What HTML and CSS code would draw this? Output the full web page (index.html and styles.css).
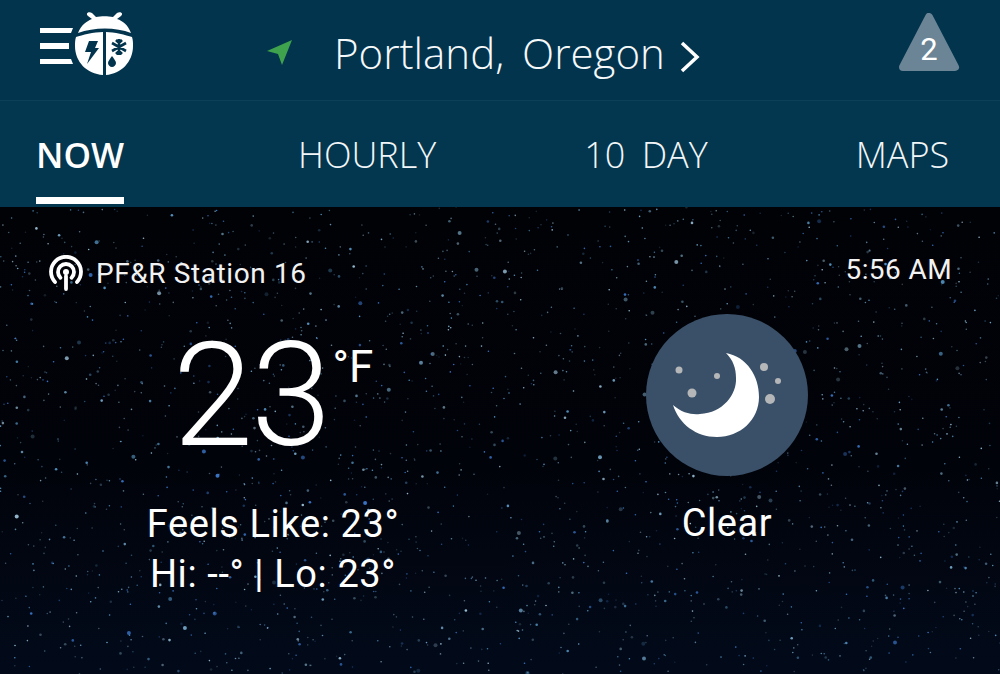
FILE: index.html
```html
<!DOCTYPE html>
<html lang="en">
<head>
    <meta charset="UTF-8">
    <meta name="viewport" content="width=device-width, initial-scale=1.0">
    <title>Portland, Oregon Weather</title>
    <link rel="stylesheet" href="styles.css">
</head>
<body>
    <!-- Location bar -->
    <header class="top-bar">
        <svg class="logo" viewBox="0 0 100 70" aria-hidden="true">
            <path class="logo-bar" d="M2 18H35L33 23H2ZM2 33H31V39H2ZM2 49H33L35 54H2Z"/>
            <path class="logo-fill" d="M40 23C43 15 49 11 54 9L50 6C47 3 51 1 54 3L58 7C63 6 70 6 75 7L79 3C82 1 86 3 83 6L79 9C85 11 90 15 93 23C78 17 56 17 40 23Z"/>
            <path class="logo-fill" d="M38 27C44 25 56 22 65 22V65C49 64 37 52 37 36C37 33 37 30 38 27ZM68 22C76 22 88 25 94 27C95 30 95 33 95 36C95 52 83 64 68 65Z"/>
            <path class="logo-bolt" d="M51 31H60L57 38H61L49 54L53 42H47Z"/>
            <path class="logo-snow" d="M81 29V45M74 33L88 41M74 41L88 33M78 30L81 33L84 30M78 44L81 41L84 44"/>
            <path class="logo-bolt" d="M74 46C76 49 78 51 78 53C78 55 76 57 74 57C72 57 70 55 70 53C70 51 72 49 74 46Z"/>
        </svg>
        <div class="location">
            <svg class="arrow" viewBox="0 0 28 28" aria-hidden="true">
                <path d="M26 1L1 12L12 15L16 26Z"/>
            </svg>
            <span class="city">Portland, Oregon</span>
            <svg class="chevron" viewBox="0 0 20 32" aria-hidden="true">
                <path d="M2 2L17 16L2 30"/>
            </svg>
        </div>
        <div class="alert">
            <svg class="alert-shape" viewBox="0 0 62 60" aria-hidden="true">
                <path d="M31 4L57 54H5Z"/>
            </svg>
            <span class="alert-count">2</span>
        </div>
    </header>

    <!-- Tabs -->
    <nav class="tabs">
        <a class="tab active">NOW</a>
        <a class="tab">HOURLY</a>
        <a class="tab">10 DAY</a>
        <a class="tab">MAPS</a>
    </nav>

    <!-- Current conditions -->
    <main class="current">
        <svg id="stars" class="stars" aria-hidden="true"></svg>
        <div class="station-row">
            <div class="station">
                <svg class="station-icon" viewBox="0 0 36 36" aria-hidden="true">
                    <path d="M7 27A15 15 0 1 1 29 27"/>
                    <path d="M12.5 22.8A8 8 0 1 1 23.5 22.8"/>
                    <circle cx="18" cy="17" r="3"/>
                    <path d="M18 21V34"/>
                </svg>
                <span>PF&amp;R Station 16</span>
            </div>
            <span class="time">5:56 AM</span>
        </div>
        <div class="columns">
            <section class="temps">
                <div class="temp"><span class="temp-value">23</span><span class="temp-unit">°F</span></div>
                <p class="line">Feels Like: 23°</p>
                <p class="line">Hi: --° | Lo: 23°</p>
            </section>
            <section class="condition">
                <svg class="moon" viewBox="0 0 162 162" aria-hidden="true">
                    <circle class="moon-bg" cx="81" cy="81" r="81"/>
                    <path class="moon-shape" d="M80 39C101 43 113 62 113 83C113 106 94 123 71 123C50 123 33 110 27 91C36 99 46 101 54 100C77 99 91 80 90 64C90 54 87 46 80 39Z"/>
                    <circle class="moon-dot" cx="33" cy="56" r="3.5"/>
                    <circle class="moon-dot" cx="71" cy="62" r="3"/>
                    <circle class="moon-dot" cx="46" cy="79" r="4.5"/>
                    <circle class="moon-dot" cx="118" cy="53" r="4"/>
                    <circle class="moon-dot" cx="132" cy="67" r="3"/>
                    <circle class="moon-dot" cx="124" cy="85" r="5"/>
                </svg>
                <p class="line">Clear</p>
            </section>
        </div>
    </main>

    <script src="stars.js"></script>
</body>
</html>
```

FILE: styles.css
```css
* { box-sizing: border-box; }

html, body {
    margin: 0;
    height: 100%;
    overflow: hidden;
}
body {
    width: 1000px;
    height: 674px;
    background: #000;
    color: #fff;
    font-family: Roboto, sans-serif;
    display: flex;
    flex-direction: column;
}

.top-bar {
    height: 101px;
    background: #03344e;
    border-bottom: 1px solid #0c3f59;
    display: flex;
    align-items: flex-start;
    flex-shrink: 0;
}
.logo {
    width: 100px;
    height: 70px;
    margin: 10px 0 0 38px;
}
.logo-bar, .logo-fill { fill: #fff; }
.logo-bolt { fill: #03344e; }
.logo-snow {
    fill: none;
    stroke: #03344e;
    stroke-width: 2.6;
}

.location {
    display: flex;
    align-items: center;
    height: 100px;
    margin-left: 128px;
    padding-top: 4px;
}
.arrow {
    width: 28px;
    height: 28px;
    margin-top: 2px;
}
.arrow path { fill: #3fa34d; }
.city {
    font-family: "Open Sans", sans-serif;
    font-weight: 350;
    font-size: 42px;
    word-spacing: 7px;
    color: #f6f9fa;
    margin-left: 40px;
}
.chevron {
    width: 20px;
    height: 32px;
    margin: 9px 0 0 15px;
}
.chevron path {
    fill: none;
    stroke: #fff;
    stroke-width: 3.5;
}

.alert {
    position: relative;
    width: 62px;
    height: 60px;
    margin: 13px 40px 0 auto;
}
.alert-shape {
    width: 62px;
    height: 60px;
}
.alert-shape path {
    fill: #6b8596;
    stroke: #6b8596;
    stroke-width: 8;
    stroke-linejoin: round;
}
.alert-count {
    position: absolute;
    left: 0;
    right: 0;
    top: 20px;
    text-align: center;
    font-size: 31px;
    line-height: 34px;
}

.tabs {
    height: 106px;
    background: #03364f;
    display: flex;
    padding-left: 36px;
    font-family: "Open Sans", sans-serif;
    font-weight: 350;
    font-size: 36px;
    flex-shrink: 0;
}
.tab {
    color: #f2f6f8;
    line-height: 108px;
    height: 103px;
    margin-right: 148px;
    word-spacing: 7px;
    white-space: nowrap;
}
.tab.active {
    color: #fff;
    font-weight: 600;
    font-size: 35px;
    width: 90px;
    margin-right: 174px;
    border-bottom: 7px solid #fff;
}

.current {
    position: relative;
    flex: 1;
    background: linear-gradient(#010206 0, #01030a 55%, #020a1a 100%);
    overflow: hidden;
    padding: 46px 48px 0 48px;
}
.stars {
    position: absolute;
    left: 0;
    top: 0;
    width: 1000px;
    height: 467px;
}

.station-row {
    position: relative;
    display: flex;
    justify-content: space-between;
    height: 40px;
}
.station {
    display: flex;
    align-items: center;
    font-size: 28px;
    letter-spacing: 0.6px;
    color: #f2f2f2;
}
.station-icon {
    width: 36px;
    height: 36px;
    margin-right: 12px;
}
.station-icon path {
    fill: none;
    stroke: #fff;
    stroke-width: 3.8;
    stroke-linecap: round;
}
.station-icon circle { fill: #fff; }
.time {
    font-size: 28px;
    letter-spacing: 0.4px;
    line-height: 34px;
    color: #f2f2f2;
}

.columns {
    position: relative;
    display: flex;
}
.temps {
    width: 450px;
    margin-left: -48px;
    text-align: center;
    padding-left: 96px;
}
.temp {
    display: flex;
    justify-content: center;
    height: 186px;
    margin-top: 20px;
}
.temp-value {
    font-size: 145px;
    line-height: 164px;
    font-weight: 300;
    letter-spacing: -2px;
}
.temp-unit {
    font-size: 44px;
    line-height: 48px;
    margin: 30px 0 0 3px;
}
.line {
    margin: 0;
    font-size: 38px;
    line-height: 50px;
    letter-spacing: 0.6px;
}
.condition {
    width: 162px;
    margin-left: 196px;
    margin-top: 21px;
    text-align: center;
}
.moon {
    display: block;
    width: 162px;
    height: 162px;
    margin-bottom: 22px;
}
.moon-bg { fill: #3a5068; }
.moon-shape { fill: #fff; }
.moon-dot { fill: #b4b6b8; }
```

FILE: stars.js
```js
// Draws the night sky behind the current conditions
var svg = document.getElementById("stars");
var seed = 73;

function rand() {
    seed = (seed * 16807) % 2147483647;
    return seed / 2147483647;
}

var colors = ["#a9d2ea", "#7fb6da", "#5b9fd0", "#3f7fd8", "#5f8399"];
var html = "";
for (var i = 0; i < 2200; i++) {
    var x = rand() * 1000;
    var y = rand() * 467;
    var size = rand();
    var r = size > 0.975 ? 2 : size > 0.8 ? 1.3 : 0.8;
    var color = colors[Math.floor(rand() * colors.length)];
    var opacity = (0.2 + rand() * 0.7).toFixed(2);
    html += '<circle cx="' + x.toFixed(1) + '" cy="' + y.toFixed(1) + '" r="' + r + '" fill="' + color + '" opacity="' + opacity + '"/>';
}
svg.innerHTML = html;
```
